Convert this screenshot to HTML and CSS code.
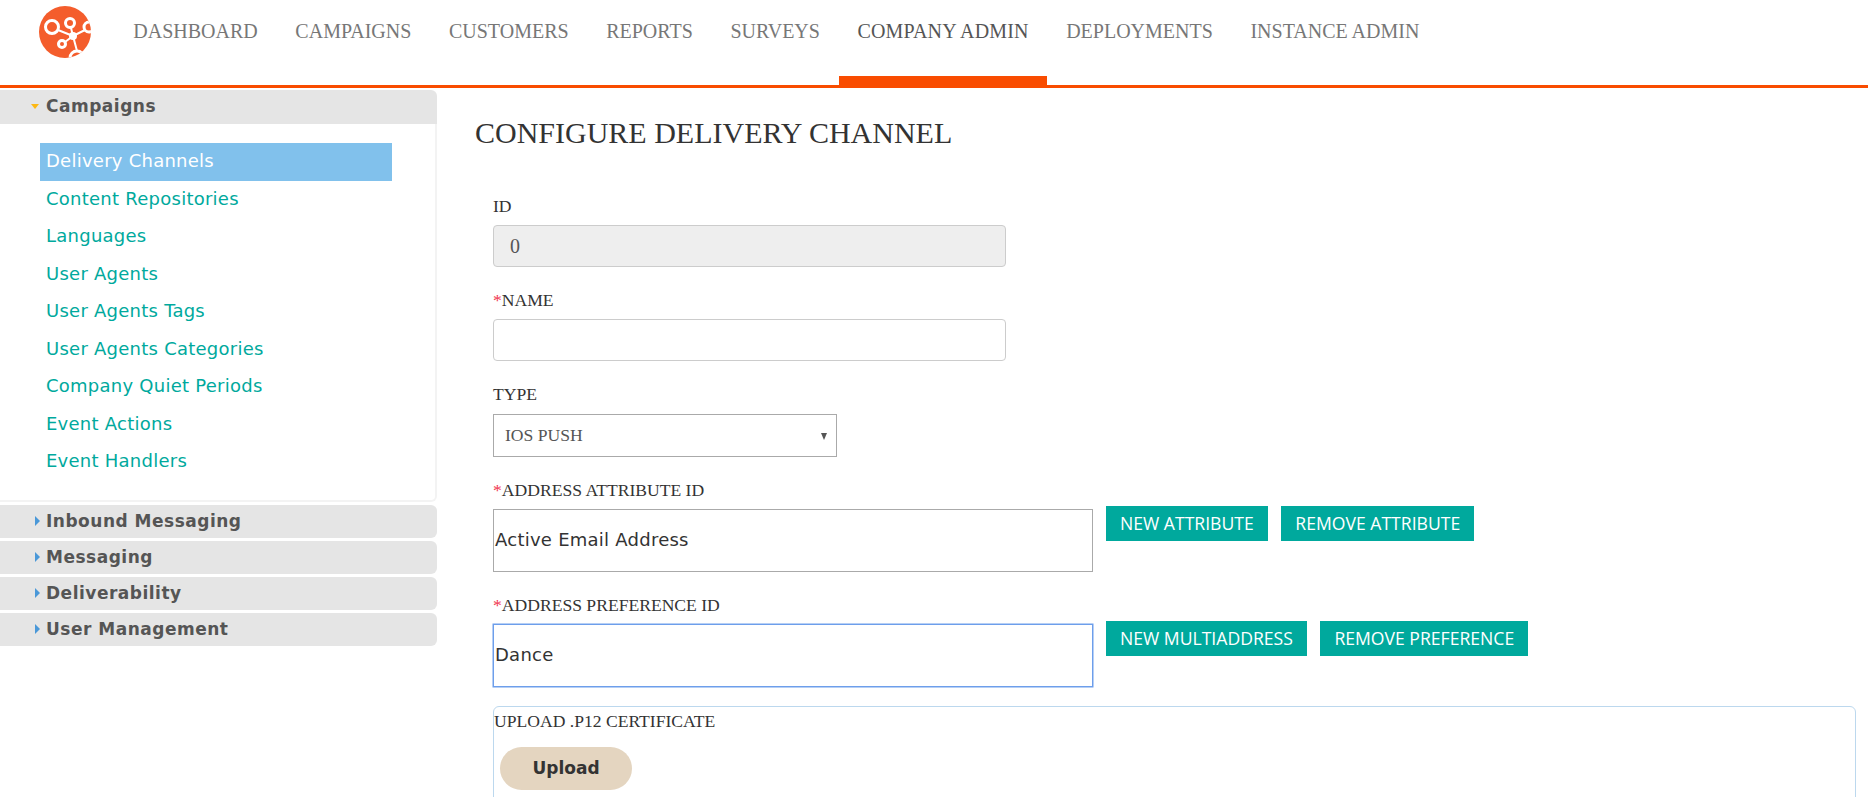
FILE: index.html
```html
<!DOCTYPE html>
<html lang="en">
  <head>
    <meta charset="UTF-8" />
    <title>Configure Delivery Channel</title>
    <link rel="stylesheet" href="styles.css">
  </head>
  <body>
    <!-- Top navigation -->
    <header class="top-bar">
      <a href="#" class="logo" aria-label="Home">
        <svg viewBox="0 0 52 52" width="52" height="52">
          <defs>
            <clipPath id="logo-clip"><circle cx="26" cy="26" r="26" /></clipPath>
          </defs>
          <circle cx="26" cy="26" r="26" fill="#f45d2c" />
          <g clip-path="url(#logo-clip)" fill="none" stroke="#fff" stroke-width="3">
            <circle cx="13" cy="21" r="6.500" />
            <circle cx="31" cy="17" r="4.500" />
            <circle cx="23" cy="38" r="3.500" />
            <circle cx="50" cy="21" r="5" />
            <circle cx="38" cy="52" r="7" />
            <path d="M19 24 L34 30 M32 22 L34 30 L46 24 M34 30 L26 36 M34 30 L38 45" stroke-width="2" />
          </g>
          <circle cx="34" cy="30" r="4" fill="#fff" />
        </svg>
      </a>
      <nav class="main-nav">
        <a href="#">Dashboard</a>
        <a href="#">Campaigns</a>
        <a href="#">Customers</a>
        <a href="#">Reports</a>
        <a href="#">Surveys</a>
        <a href="#" class="active">Company Admin</a>
        <a href="#">Deployments</a>
        <a href="#">Instance Admin</a>
      </nav>
    </header>

    <div class="page">
      <!-- Sidebar accordion -->
      <aside class="sidebar">
        <h3 class="acc-head open">Campaigns</h3>
        <ul class="acc-panel">
          <li><a href="#" class="current">Delivery Channels</a></li>
          <li><a href="#">Content Repositories</a></li>
          <li><a href="#">Languages</a></li>
          <li><a href="#">User Agents</a></li>
          <li><a href="#">User Agents Tags</a></li>
          <li><a href="#">User Agents Categories</a></li>
          <li><a href="#">Company Quiet Periods</a></li>
          <li><a href="#">Event Actions</a></li>
          <li><a href="#">Event Handlers</a></li>
        </ul>
        <h3 class="acc-head">Inbound Messaging</h3>
        <h3 class="acc-head">Messaging</h3>
        <h3 class="acc-head">Deliverability</h3>
        <h3 class="acc-head">User Management</h3>
      </aside>

      <!-- Form -->
      <main class="content">
        <h1>Configure Delivery Channel</h1>
        <form class="channel-form">
          <div class="field">
            <label>ID</label>
            <input type="text" class="text-input" value="0" disabled />
          </div>
          <div class="field">
            <label><span class="req">*</span>Name</label>
            <input type="text" class="text-input" />
          </div>
          <div class="field">
            <label class="type-label">Type</label>
            <div class="select-box">IOS Push</div>
          </div>
          <div class="field">
            <label><span class="req">*</span>Address Attribute ID</label>
            <div class="picker-row">
              <div class="picker">Active Email Address</div>
              <button type="button" class="btn-teal">New Attribute</button>
              <button type="button" class="btn-teal">Remove Attribute</button>
            </div>
          </div>
          <div class="field">
            <label><span class="req">*</span>Address Preference ID</label>
            <div class="picker-row">
              <div class="picker focused">Dance</div>
              <button type="button" class="btn-teal">New Multiaddress</button>
              <button type="button" class="btn-teal">Remove Preference</button>
            </div>
          </div>
          <div class="upload-box">
            <label>Upload .p12 Certificate</label>
            <button type="button" class="btn-upload">Upload</button>
          </div>
        </form>
      </main>
    </div>
  </body>
</html>
```

FILE: styles.css
```css
html,
body {
  height: 797px;
  overflow: hidden;
}
body {
  margin: 0;
  background: #fff;
  color: #333;
  font-family: "Liberation Serif", serif;
}

/* Top bar */
.top-bar {
  display: flex;
  height: 85px;
  border-bottom: 3px solid #f94c00;
}
.logo {
  display: block;
  margin: 6px 0 0 39px;
  width: 52px;
  height: 52px;
}
.main-nav {
  display: flex;
  margin-left: 23.500px;
}
.main-nav a {
  position: relative;
  height: 85px;
  padding: 19px 18.800px 0;
  box-sizing: border-box;
  color: #777;
  font-size: 20px;
  line-height: 24px;
  text-decoration: none;
  text-transform: uppercase;
}
.main-nav a.active {
  color: #555;
  letter-spacing: 0.15px;
}
.main-nav a.active::after {
  content: "";
  position: absolute;
  left: 0;
  right: 0;
  bottom: -3px;
  height: 12px;
  background: #f94c00;
}

.page {
  display: flex;
}

/* Sidebar */
.sidebar {
  flex: none;
  width: 437px;
  padding-top: 2px;
}
.acc-head {
  position: relative;
  margin: 0 0 3px;
  height: 33px;
  padding-left: 46px;
  background: #e5e5e5;
  border-radius: 0 6px 6px 0;
  color: #555;
  font-family: "DejaVu Sans", sans-serif;
  font-size: 17px;
  font-weight: 700;
  letter-spacing: 0.5px;
  line-height: 33px;
}
.acc-head::before {
  content: "";
  position: absolute;
  left: 35px;
  top: 11px;
  border-style: solid;
  border-width: 5px 0 5px 5px;
  border-color: transparent transparent transparent #4a98d8;
}
.acc-head.open {
  margin: 0;
  height: 34px;
  border-radius: 0 6px 0 0;
}
.acc-head.open::before {
  left: 31px;
  top: 14px;
  border-width: 5px 4px 0;
  border-color: #fdb813 transparent transparent;
}
.acc-panel {
  list-style: none;
  margin: 0 0 3px;
  padding: 19px 0 19px 40px;
  height: 338px;
  border-right: 2px solid #f3f3f3;
  border-bottom: 2px solid #f3f3f3;
  border-radius: 0 0 6px 0;
}
.acc-panel a {
  display: block;
  width: 352px;
  height: 37.500px;
  padding-left: 6px;
  box-sizing: border-box;
  color: #00a99d;
  font-family: "DejaVu Sans", sans-serif;
  font-size: 18px;
  letter-spacing: 0.25px;
  line-height: 36px;
  text-decoration: none;
}
.acc-panel a.current {
  background: #81c1ec;
  color: #fff;
}

/* Content */
.content {
  flex: 1;
  padding-left: 38px;
  min-width: 0;
}
.content h1 {
  margin: 28px 0 0;
  color: #333;
  font-size: 30px;
  font-weight: 400;
  line-height: 34px;
  text-transform: uppercase;
}
.channel-form {
  margin: 47px 12px 0 18px;
}
.field {
  margin-bottom: 24px;
}
.field label,
.upload-box label {
  display: block;
  height: 20px;
  margin-bottom: 8px;
  color: #333;
  font-size: 17.600px;
  line-height: 18px;
  text-transform: uppercase;
}
.field .type-label {
  margin-bottom: 9px;
}
.req {
  color: #f0354f;
}
.text-input {
  display: block;
  width: 513px;
  height: 42px;
  box-sizing: border-box;
  padding: 0 16px;
  border: 1px solid #ccc;
  border-radius: 4px;
  background: #fff;
  color: #555;
  font-family: "Liberation Serif", serif;
  font-size: 20px;
}
.text-input:disabled {
  background: #eee;
}
.select-box {
  position: relative;
  width: 344px;
  height: 43px;
  box-sizing: border-box;
  padding-left: 11px;
  border: 1px solid #aaa;
  color: #555;
  font-size: 17.600px;
  line-height: 41px;
  text-transform: uppercase;
}
.select-box::after {
  content: "";
  position: absolute;
  right: 9px;
  top: 18px;
  border-style: solid;
  border-width: 7px 3.500px 0;
  border-color: #555 transparent transparent;
}
.picker-row {
  display: flex;
  align-items: flex-start;
  gap: 13.500px;
  margin-top: -3px;
}
.picker {
  width: 600px;
  height: 63px;
  margin-top: 3px;
  margin-right: -0.500px;
  box-sizing: border-box;
  padding-left: 1px;
  border: 1px solid #aaa;
  color: #333;
  font-family: "DejaVu Sans", sans-serif;
  font-size: 18px;
  letter-spacing: 0.25px;
  line-height: 59px;
}
.picker.focused {
  border-color: #6d9eeb;
  box-shadow: 0 0 0 0.5px #6d9eeb;
}
.btn-teal {
  height: 35px;
  padding: 0 14px 2px;
  border: none;
  background: #00a99d;
  color: #fff;
  font-family: "Open Sans", sans-serif;
  font-size: 17.600px;
  font-weight: 500;
  text-transform: uppercase;
}
.upload-box {
  margin-top: -5px;
  height: 120px;
  box-sizing: border-box;
  border: 1px solid #bcd8ee;
  border-radius: 6px;
}
.upload-box label {
  height: 30px;
  margin-bottom: 10px;
  line-height: 28px;
}
.btn-upload {
  display: block;
  width: 132px;
  height: 43px;
  margin-left: 6px;
  padding-bottom: 2px;
  border: none;
  border-radius: 22px;
  background: #e4d5c0;
  color: #333;
  font-family: "DejaVu Sans", sans-serif;
  font-size: 17px;
  font-weight: 700;
}
```
